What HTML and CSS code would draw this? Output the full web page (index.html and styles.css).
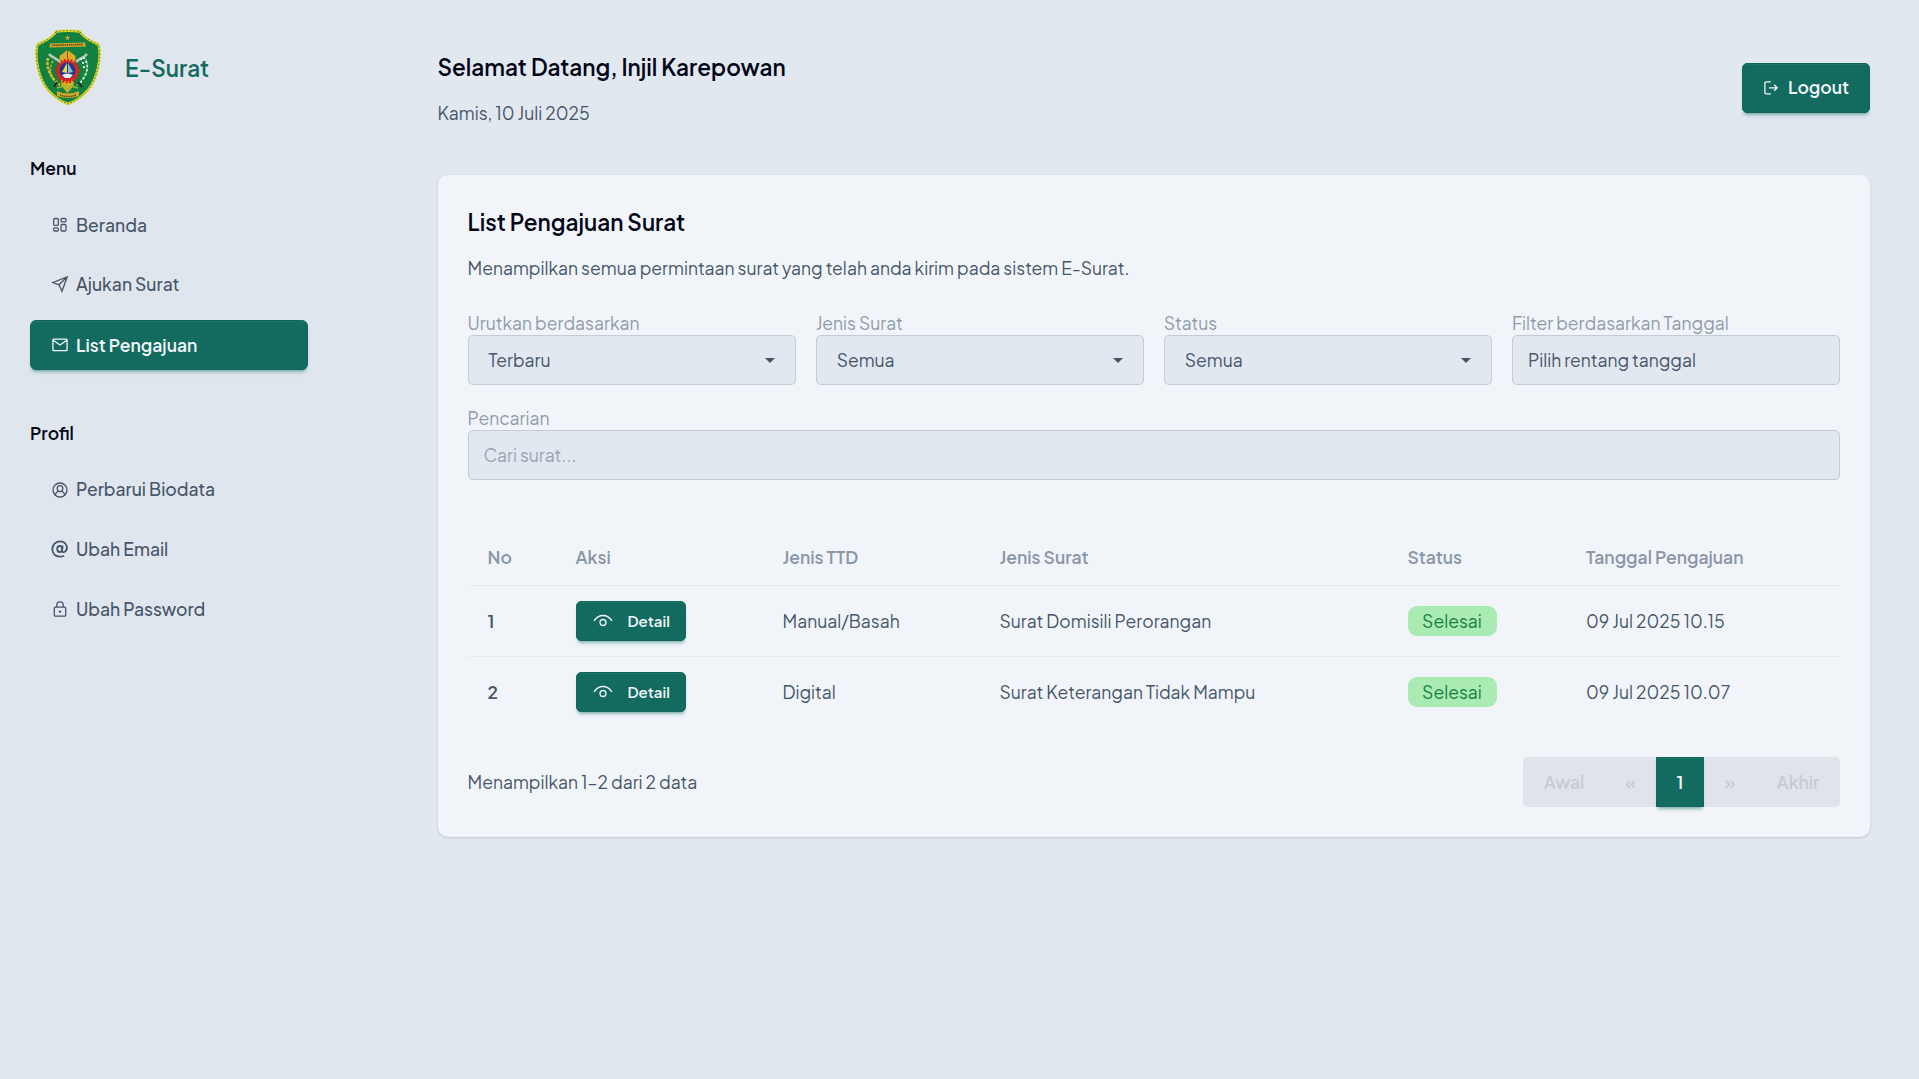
FILE: index.html
```html
<!DOCTYPE html>
<html lang="id">
<head>
<meta charset="utf-8">
<title>E-Surat</title>
<link rel="stylesheet" href="styles.css">
</head>
<body>
<div class="app">
  <aside class="sidebar">
    <div class="brand">
      <svg class="emblem" viewBox="0 0 72 82">
        <path d="M24 5.5Q36 4 48 5.500C51 12 60 15.500 66.500 18.500C70 32 65 53 56 64Q47 74 36 78Q25 74 16 64C7 53 2 32 5.500 18.500C12 15.500 21 12 24 5.500Z" fill="#12813f" stroke="#e5d52c" stroke-width="2.400"/>
        <path d="M24 5.500Q36 4 48 5.500C51 12 60 15.500 66.500 18.500C70 32 65 53 56 64Q47 74 36 78Q25 74 16 64C7 53 2 32 5.500 18.500C12 15.500 21 12 24 5.500Z" fill="none" stroke="#3b8b34" stroke-width="1" stroke-dasharray="1.500 2"/>
        <path d="M35.500 9l.7 2h2l-1.600 1.200.6 2-1.700-1.200-1.700 1.200.6-2-1.600-1.200h2z" fill="#d2ab2b"/>
        <path d="M18 17.500l35-1 .8 4-36.300 1z" fill="#d3a92b"/>
        <path d="M20 19.400l31.500-1" stroke="#4b4420" stroke-width="1.500" stroke-dasharray="1.400 .7"/>
        <path d="M35.500 24l8 6-2 30-6 7-6-7-2-30z" fill="#dfac27"/>
        <path d="M35.500 24v8" stroke="#80521c"/>
        <path d="M17 28c3 4 8 4 12 9M55 28c-3 4-7 4-11 8" fill="none" stroke="#b9c8c0" stroke-width="2.600"/>
        <path d="M16 32c-2 9 2 20 12 27" fill="none" stroke="#e3bd2b" stroke-width="2.500" stroke-dasharray="3 1.200"/>
        <path d="M21 35c-4 6-3 14 1 19" fill="none" stroke="#d9ad2b" stroke-width="1.500" stroke-dasharray="2.500 1.500"/>
        <path d="M54 33c4 9-1 20-10 27" fill="none" stroke="#7cc48a" stroke-width="1"/>
        <path d="M52 32c6 8 3 17-4 25M49 33c3 4 3 8 3 12" fill="none" stroke="#edf7ee" stroke-width="2" stroke-linecap="round" stroke-dasharray=".3 4"/>
        <path d="M25 56l-3 5M46 56l4 5" stroke="#222" stroke-width="1.800"/>
        <circle cx="35.500" cy="45" r="10.600" fill="#df251d"/>
        <circle cx="35.500" cy="45" r="11.300" fill="none" stroke="#c9251c" stroke-width="2" stroke-dasharray="2 1.500"/>
        <circle cx="35.500" cy="44.500" r="8" fill="#26358c"/>
        <path d="M35 37v10l-5-1z" fill="#e6dc3a"/>
        <path d="M36 37l5 9-5 1z" fill="#83bde0"/>
        <path d="M30 49q5-3 11 0l-3 3h-5z" fill="#eef3f5"/>
        <path d="M25 62q10-4 21 0M31 59l5 5 5-5" fill="none" stroke="#9bb834" stroke-width="1.500"/>
        <path d="M25 65q11 5 22 0v5q-11 4-22 0z" fill="#d3a92b"/>
        <path d="M28 69q8 3 16 0" fill="none" stroke="#5b4b1e" stroke-width="1.500" stroke-dasharray="1.400 .7"/>
      </svg>
      <span class="brand-name">E-Surat</span>
    </div>

    <h3 class="group-title menu-title">Menu</h3>
    <nav class="nav">
      <a class="nav-item"><svg class="icon" viewBox="0 0 16 16"><g class="line"><rect x="1.700" y="1.500" width="4.600" height="6.800" rx="1"/><rect x="9" y="1.500" width="5" height="3.400" rx="1"/><rect x="1.700" y="10.800" width="4.600" height="3.200" rx="1"/><rect x="9" y="7.500" width="5" height="6.500" rx="1"/></g></svg><span>Beranda</span></a>
      <a class="nav-item"><svg class="icon" viewBox="0 0 16 16"><path class="line" d="M.8 6.500L15.200.8 10 15.200 7 8.800zM7 8.800L15 1"/></svg><span>Ajukan Surat</span></a>
      <a class="nav-item active"><svg class="icon" viewBox="0 0 16 16"><path class="line" d="M1.800 2.200h12.400q.9 0 .9.900v9.600q0 .9-.9.900H1.800q-.9 0-.9-.9V3.100q0-.9.9-.9zM1.200 3.200L8 8l6.800-4.800"/></svg><span>List Pengajuan</span></a>
    </nav>

    <h3 class="group-title profile-title">Profil</h3>
    <nav class="nav">
      <a class="nav-item"><svg class="icon" viewBox="0 0 16 16"><g class="line"><circle cx="8" cy="8" r="7"/><ellipse cx="8" cy="6.600" rx="2.800" ry="3"/><path d="M3.300 13.200q.4-3 3-4M12.700 13.200q-.4-3-3-4"/></g></svg><span>Perbarui Biodata</span></a>
      <a class="nav-item"><svg class="icon" viewBox="0 0 16 16"><g class="line at"><ellipse cx="7.700" cy="8" rx="2.500" ry="3"/><path d="M10.700 4.700l-.6 4.800c-.3 2.200 2.100 2 3.300.8 1.200-1.200 2-3.600 1.100-5.800C13.300 1.600 10.900.3 8.200.3 3.700.3.300 3.700.3 8c0 4.700 3.200 7.700 7.500 7.700 1.800 0 3.200-.4 4.300-1"/></g></svg><span>Ubah Email</span></a>
      <a class="nav-item"><svg class="icon" viewBox="0 0 16 16"><path class="line" d="M3.300 6.200h9.400q1 0 1 1v7q0 1-1 1H3.300q-1 0-1-1v-7q0-1 1-1zM4.800 6V3.800C4.800-.1 11.200-.1 11.200 3.800V6"/><circle cx="8" cy="10.600" r="1.200" fill="currentColor"/></svg><span>Ubah Password</span></a>
    </nav>
  </aside>

  <main class="main">
    <header class="topbar">
      <div>
        <h1 class="title">Selamat Datang, Injil Karepowan</h1>
        <p class="date">Kamis, 10 Juli 2025</p>
      </div>
      <button class="btn logout"><svg class="icon" viewBox="0 0 16 16"><path class="line" d="M7.800 1.800H3.200q-1.300 0-1.300 1.300v9.400q0 1.300 1.300 1.300h4.600M6 7.800h8.200M11.200 4.800l3 3-3 3"/></svg><span>Logout</span></button>
    </header>

    <section class="card">
      <h2 class="card-title">List Pengajuan Surat</h2>
      <p class="lead">Menampilkan semua permintaan surat yang telah anda kirim pada sistem E-Surat.</p>

      <div class="filters">
        <div class="field"><label>Urutkan berdasarkan</label><div class="control select"><span>Terbaru</span><i class="caret"></i></div></div>
        <div class="field"><label>Jenis Surat</label><div class="control select"><span>Semua</span><i class="caret"></i></div></div>
        <div class="field"><label>Status</label><div class="control select"><span>Semua</span><i class="caret"></i></div></div>
        <div class="field"><label>Filter berdasarkan Tanggal</label><div class="control"><span>Pilih rentang tanggal</span></div></div>
        <div class="field wide"><label>Pencarian</label><div class="control placeholder"><span>Cari surat...</span></div></div>
      </div>

      <table class="table">
        <colgroup><col class="c-no"><col class="c-action"><col class="c-sign"><col class="c-type"><col class="c-status"><col></colgroup>
        <thead>
          <tr><th>No</th><th>Aksi</th><th>Jenis TTD</th><th>Jenis Surat</th><th>Status</th><th>Tanggal Pengajuan</th></tr>
        </thead>
        <tbody>
          <tr>
            <td class="num">1</td>
            <td><button class="btn detail"><svg class="eye" viewBox="0 0 20 16"><path class="line" d="M1 8Q4.500 2.500 10 2.500T19 8"/><circle class="line" cx="10" cy="9.500" r="3"/></svg><span>Detail</span></button></td>
            <td class="text">Manual/Basah</td>
            <td class="text">Surat Domisili Perorangan</td>
            <td><span class="badge">Selesai</span></td>
            <td class="text">09 Jul 2025 10.15</td>
          </tr>
          <tr>
            <td class="num">2</td>
            <td><button class="btn detail"><svg class="eye" viewBox="0 0 20 16"><path class="line" d="M1 8Q4.500 2.500 10 2.500T19 8"/><circle class="line" cx="10" cy="9.500" r="3"/></svg><span>Detail</span></button></td>
            <td class="text">Digital</td>
            <td class="text">Surat Keterangan Tidak Mampu</td>
            <td><span class="badge">Selesai</span></td>
            <td class="text">09 Jul 2025 10.07</td>
          </tr>
        </tbody>
      </table>

      <footer class="card-footer">
        <p>Menampilkan 1–2 dari 2 data</p>
        <div class="pager">
          <span class="page first">Awal</span><span class="page prev">«</span><span class="page current">1</span><span class="page next">»</span><span class="page last">Akhir</span>
        </div>
      </footer>
    </section>
  </main>
</div>
</body>
</html>
```
FILE: styles.css
```css
* { box-sizing: border-box; }
body {
  margin: 0;
  background: #e2e8f0;
  color: #475569;
  font: 400 17.5px/25px "Plus Jakarta Sans", Inter, sans-serif;
}
h1, h2, h3, p { margin: 0; }
p { font-weight: 400; }
button { font: inherit; }

.line { fill: none; stroke: currentColor; stroke-width: 1.3; }
.line.at { stroke-width: 1.8; }
.icon { width: 16px; height: 16px; flex: none; overflow: visible; }

.app { display: flex; min-height: 1079px; }
.sidebar {
  width: 338px;
  padding: 26px 30px;
  background: #e0e6ee;
}
.brand { display: flex; align-items: center; gap: 21px; padding-left: 2px; height: 82px; }
.emblem { width: 72px; height: 82px; }
.brand-name { color: #126b5e; font-size: 22.5px; font-weight: 600; line-height: 30px; padding-top: 1px; }
.group-title { color: #020617; font-size: 17.5px; font-weight: 600; line-height: 25px; }
.menu-title { margin-top: 48px; }
.profile-title { margin-top: 51px; }
.nav { display: flex; flex-direction: column; gap: 10px; margin-top: 19px; }
.nav-item {
  display: flex;
  align-items: center;
  gap: 8px;
  height: 50px;
  padding: 0 0 2px 22px;
  border-radius: 6px;
  font-weight: 550;
}
.nav-item:first-child { padding-bottom: 0; }
.profile-title + .nav .nav-item:first-child { padding-bottom: 1px; }
.active, .btn, .current {
  border: 1px solid #11655a;
  background: #126b5e;
  color: #f1f5f9;
  font-weight: 600;
  box-shadow: 0 3px 3px -2px rgba(18,107,94,.35), 0 4px 4px -2px rgba(18,107,94,.3), inset 0 1px 0 rgba(255,255,255,.06);
}
.active { width: 278px; padding: 0 0 0 21px; }

.main { flex: 1; padding: 53px 49px 0 99.5px; }
.topbar { display: flex; justify-content: space-between; height: 122px; }
.title { color: #020617; font-size: 22.5px; font-weight: 600; line-height: 29px; }
.date { margin-top: 19px; }
.btn { display: flex; align-items: center; border-radius: 5px; padding: 0; }
.logout { width: 128px; height: 50px; margin-top: 10px; padding: 0 0 1px 20px; gap: 9px; }

.card {
  height: 662px;
  padding: 30px;
  border-radius: 10px;
  background: #f1f5f9;
  box-shadow: 0 1px 3px rgba(71,85,105,.18), 0 1px 2px -1px rgba(71,85,105,.2);
}
.card-title { color: #020617; font-size: 22.5px; font-weight: 600; line-height: 35px; }
.lead { margin-top: 16px; }
.filters { display: grid; grid-template-columns: repeat(4, 1fr); gap: 20px; margin-top: 29px; }
.field label { display: block; padding-top: 1px; color: #909ba9; line-height: 24px; }
.wide { grid-column: 1 / -1; }
.control {
  display: flex;
  align-items: center;
  height: 50px;
  padding: 1px 15px 0;
  border: 1px solid #c3cbd6;
  border-radius: 5px;
  background: #e2e8f0;
}
.select { justify-content: space-between; padding: 1px 20px 0; }
.placeholder { color: #99a4b2; }
.caret { border: 5px solid transparent; border-top-color: #475569; border-bottom: 0; }

.table { width: 100%; margin-top: 50px; table-layout: fixed; border-collapse: collapse; }
.c-no { width: 88px; }
.c-action { width: 207px; }
.c-sign { width: 217px; }
.c-type { width: 408px; }
.c-status { width: 178.5px; }
th, td { padding: 0 20px; text-align: left; }
th { height: 55px; color: #8b96a6; font-weight: 600; }
td { height: 71px; }
.text, .num { padding-top: 1px; }
thead tr, tbody tr:first-child { border-bottom: 1px solid #e7ebf1; }
.num { font-weight: 600; }
.detail { width: 110px; height: 40px; padding-left: 16px; gap: 15px; font-size: 15px; }
.eye { width: 20px; height: 16px; }
.badge {
  display: block;
  width: 89px;
  height: 30px;
  border-radius: 9px;
  background: #aaeab3;
  color: #15803d;
  line-height: 30px;
  text-align: center;
}

.card-footer { display: flex; justify-content: space-between; align-items: center; margin-top: 30px; }
.pager { display: flex; height: 50px; color: #c5ccd4; font-weight: 600; line-height: 50px; text-align: center; border-radius: 5px; background: #e0e4ea; }
.first { width: 82px; }
.prev { width: 51px; }
.current { width: 48px; line-height: 48px; }
.next { width: 52px; }
.last { width: 84px; }
```
